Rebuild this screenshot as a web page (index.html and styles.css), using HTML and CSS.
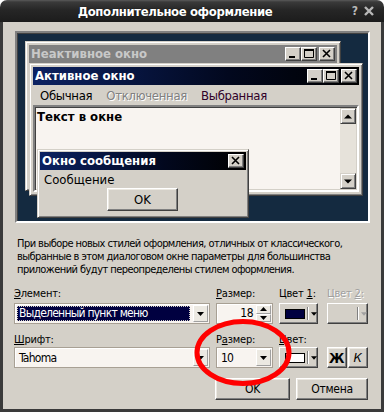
FILE: index.html
```html
<!DOCTYPE html>
<html lang="ru">
<head>
<meta charset="utf-8">
<title>Дополнительное оформление</title>
<link rel="stylesheet" href="styles.css">
</head>
<body>
<div class="win">
  <div class="titlebar">
    <span class="title">Дополнительное оформление</span>
    <span class="tb-help">?</span>
    <svg class="tb-close" width="12" height="12" viewBox="0 0 12 12"><path d="M2 2L10 10M10 2L2 10" stroke="#b8b8b8" stroke-width="2.4"/></svg>
  </div>
  <div class="body">
    <div class="preview">
      <div class="pw inactive">
        <div class="cap cap-inactive">
          <span class="cap-text">Неактивное окно</span>
          <div class="capbtns">
            <span class="cb"><svg width="14" height="12" viewBox="0 0 14 12"><rect x="3" y="8" width="6" height="2" fill="#000"/></svg></span>
            <span class="cb"><svg width="14" height="12" viewBox="0 0 14 12"><path d="M2.5 1.5h9v8h-9z" fill="none" stroke="#000"/><rect x="2" y="1" width="10" height="2" fill="#000"/></svg></span>
            <span class="cb cb-close"><svg width="14" height="12" viewBox="0 0 14 12"><path d="M3 2L10 9M10 2L3 9" stroke="#000" stroke-width="1.6"/></svg></span>
          </div>
        </div>
      </div>
      <div class="pw active">
        <div class="cap cap-active">
          <span class="cap-text">Активное окно</span>
          <div class="capbtns">
            <span class="cb"><svg width="14" height="12" viewBox="0 0 14 12"><rect x="3" y="8" width="6" height="2" fill="#000"/></svg></span>
            <span class="cb"><svg width="14" height="12" viewBox="0 0 14 12"><path d="M2.5 1.5h9v8h-9z" fill="none" stroke="#000"/><rect x="2" y="1" width="10" height="2" fill="#000"/></svg></span>
            <span class="cb cb-close"><svg width="14" height="12" viewBox="0 0 14 12"><path d="M3 2L10 9M10 2L3 9" stroke="#000" stroke-width="1.6"/></svg></span>
          </div>
        </div>
        <div class="menu">
          <span class="mi">Обычная</span>
          <span class="mi dis">Отключенная</span>
          <span class="mi sel">Выбранная</span>
        </div>
        <div class="client">
          <div class="ctext">Текст в окне</div>
          <div class="vscroll">
            <span class="sbtn"><svg width="8" height="5" viewBox="0 0 8 5"><path d="M0 4.5L4 0.5L8 4.5z" fill="#000"/></svg></span>
            <span class="track"></span>
            <span class="sbtn"><svg width="8" height="5" viewBox="0 0 8 5"><path d="M0 0.5L4 4.5L8 0.5z" fill="#000"/></svg></span>
          </div>
        </div>
      </div>
      <div class="pw msg">
        <div class="cap cap-active">
          <span class="cap-text">Окно сообщения</span>
          <div class="capbtns">
            <span class="cb cb-close"><svg width="14" height="12" viewBox="0 0 14 12"><path d="M3 2L10 9M10 2L3 9" stroke="#000" stroke-width="1.6"/></svg></span>
          </div>
        </div>
        <div class="msgtext">Сообщение</div>
        <div class="msgbtnrow"><span class="btn btn-msg">OK</span></div>
      </div>
    </div>

    <p class="desc">При выборе новых стилей оформления, отличных от классического,<br>выбранные в этом диалоговом окне параметры для большинства<br>приложений будут переопределены стилем оформления.</p>

    <div class="form">
      <div class="lbl row1"><u>Э</u>лемент:</div>
      <div class="lbl row1"><u>Р</u>азмер:</div>
      <div class="lbl row1">Цвет <u>1</u>:</div>
      <div class="lbl row1 lbl-dis">Цвет <u>2</u>:</div>

      <div class="combo w196">
        <span class="combo-val"><span class="hl">Выделенный пункт меню</span></span>
        <span class="dd"><svg width="7" height="4" viewBox="0 0 7 4"><path d="M0 0h7L3.5 4z" fill="#000"/></svg></span>
      </div>
      <div class="spin w57">
        <span class="spin-val">18</span>
        <span class="spin-btns">
          <span class="sp"><svg width="7" height="4" viewBox="0 0 7 4"><path d="M0 4h7L3.5 0z" fill="#000"/></svg></span>
          <span class="sp"><svg width="7" height="4" viewBox="0 0 7 4"><path d="M0 0h7L3.5 4z" fill="#000"/></svg></span>
        </span>
      </div>
      <div class="colbtn w39">
        <span class="swatch sw-navy"></span>
        <span class="cdiv"></span>
        <svg width="7" height="4" viewBox="0 0 7 4"><path d="M0 0h7L3.5 4z" fill="#000"/></svg>
      </div>
      <div class="colbtn w41 colbtn-dis">
        <span class="swatch sw-none"></span>
        <span class="cdiv"></span>
        <svg width="7" height="4" viewBox="0 0 7 4"><path d="M0 0h7L3.5 4z" fill="#a0a0a0"/></svg>
      </div>

      <div class="lbl row2"><u>Ш</u>рифт:</div>
      <div class="lbl row2">Р<u>а</u>змер:</div>
      <div class="lbl row2"><u>Ц</u>вет:</div>
      <div class="lbl row2"></div>

      <div class="combo w196">
        <span class="combo-val plain">Tahoma</span>
        <span class="dd"><svg width="7" height="4" viewBox="0 0 7 4"><path d="M0 0h7L3.5 4z" fill="#000"/></svg></span>
      </div>
      <div class="combo w57">
        <span class="combo-val plain">10</span>
        <span class="dd"><svg width="7" height="4" viewBox="0 0 7 4"><path d="M0 0h7L3.5 4z" fill="#000"/></svg></span>
      </div>
      <div class="colbtn w39">
        <span class="swatch sw-white"></span>
        <span class="cdiv"></span>
        <svg width="7" height="4" viewBox="0 0 7 4"><path d="M0 0h7L3.5 4z" fill="#000"/></svg>
      </div>
      <div class="bi">
        <span class="btn btn-b">Ж</span>
        <span class="btn btn-i">К</span>
      </div>
    </div>

    <div class="actions">
      <span class="btn btn-act">OK</span>
      <span class="btn btn-act btn-cancel">Отмена</span>
    </div>
  </div>
  <svg class="mark" width="384" height="412" viewBox="0 0 384 412"><ellipse cx="243" cy="352.5" rx="46" ry="31" fill="none" stroke="#f00" stroke-width="5"/></svg>
</div>
</body>
</html>
```

FILE: styles.css
```css
* { box-sizing: border-box; }
html, body { margin: 0; padding: 0; background: #fff; }
body {
  font-family: "DejaVu Sans Condensed", "DejaVu Sans", sans-serif;
  font-size: 11px;
  color: #000;
}
.win {
  position: relative;
  width: 384px;
  height: 412px;
}
.titlebar {
  position: relative;
  height: 22px;
  border-radius: 7px 7px 0 0;
  background: linear-gradient(#5a5a5a 0, #3a3a3a 2px, #262626 45%, #1c1c1c 100%);
  display: flex;
  align-items: center;
  justify-content: center;
}
.title {
  color: #fff;
  font-weight: bold;
  font-size: 13px;
  letter-spacing: -0.4px;
  margin-left: -34px;
  text-shadow: 0 0 1px #000;
}
.tb-help {
  position: absolute;
  right: 26px;
  top: 4px;
  color: #b8b8b8;
  font-weight: bold;
  font-size: 12px;
}
.tb-close { position: absolute; right: 9px; top: 5px; }

.body {
  height: 390px;
  background: #d4d0c8;
  border: 3px solid #3a3a3a;
  border-top: 0;
  padding: 9px 0 0 12px;
  display: flex;
  flex-direction: column;
}

/* preview canvas */
.preview {
  position: relative;
  width: 355px;
  height: 192px;
  background: #142a40;
  border: 2px solid;
  border-color: #808080 #fff #fff #808080;
  box-shadow: inset 1px 1px 0 #404040;
  flex: none;
  font-size: 13px;
}
.pw {
  position: absolute;
  background: #d4d0c8;
  border: 1px solid;
  border-color: #d4d0c8 #404040 #404040 #d4d0c8;
  box-shadow: inset 1px 1px 0 #fff, inset -1px -1px 0 #808080;
  padding: 3px;
  display: flex;
  flex-direction: column;
}
.inactive { left: 8px; top: 8px; width: 316px; height: 150px; }
.active { left: 12px; top: 30px; width: 334px; height: 133px; }
.msg { left: 20px; top: 116px; width: 212px; height: 69px; padding: 2px; }

.cap {
  height: 18px;
  flex: none;
  display: flex;
  align-items: center;
  justify-content: space-between;
  padding: 0 2px 0 2px;
  font-weight: bold;
  font-size: 13px;
}
.cap-inactive { background: #808080; color: #c8c8c8; }
.cap-active { background: linear-gradient(to right, #0c2262, #02081e 60%, #000); color: #fff; }
.cap-text { line-height: 18px; }
.capbtns { display: flex; }
.cb {
  width: 16px;
  height: 14px;
  background: #d4d0c8;
  border: 1px solid;
  border-color: #fff #404040 #404040 #fff;
  box-shadow: inset -1px -1px 0 #808080;
  display: flex;
  align-items: center;
  justify-content: center;
}
.cb-close { margin-left: 2px; }

.menu {
  height: 20px;
  flex: none;
  display: flex;
  align-items: center;
  gap: 14px;
  padding-left: 7px;
  font-size: 13px;
  letter-spacing: -0.3px;
  color: #000;
}
.mi.dis { color: #808080; text-shadow: 1px 1px 0 #fff; }
.mi.sel { color: #300028; }

.client {
  flex: 1;
  display: flex;
  justify-content: space-between;
  background: #f8f4f0;
  border: 2px solid;
  border-color: #808080 #fff #fff #808080;
  box-shadow: inset 1px 1px 0 #404040, inset -1px -1px 0 #d4d0c8;
}
.ctext {
  font-weight: bold;
  font-size: 13px;
  line-height: 15px;
  padding: 2px 0 0 2px;
}
.vscroll {
  width: 16px;
  display: flex;
  flex-direction: column;
  background: #d4d0c8;
  margin: 1px 1px 1px 0;
}
.sbtn {
  width: 16px;
  height: 16px;
  background: #d4d0c8;
  border: 1px solid;
  border-color: #d4d0c8 #404040 #404040 #d4d0c8;
  box-shadow: inset 1px 1px 0 #fff, inset -1px -1px 0 #808080;
  display: flex;
  align-items: center;
  justify-content: center;
}
.track { flex: 1; background: #e6e2da; }

.msgtext {
  font-size: 13px;
  line-height: 14px;
  padding: 3px 0 0 4px;
}
.msgbtnrow { padding: 1px 0 0 67px; }

.btn {
  display: inline-flex;
  align-items: center;
  justify-content: center;
  background: #d4d0c8;
  border: 1px solid;
  border-color: #fff #404040 #404040 #fff;
  box-shadow: inset -1px -1px 0 #808080, inset 1px 1px 0 #ece9e2;
  color: #000;
}
.btn-msg { width: 71px; height: 23px; font-size: 13px; }

/* description */
.desc {
  margin: 14px 0 0 2px;
  line-height: 13px;
  letter-spacing: -0.55px;
  white-space: nowrap;
}

/* form */
.form {
  margin-top: 11px;
  margin-left: -1px;
  display: grid;
  grid-template-columns: 202px 63px 48px 41px;
  grid-template-rows: 16px 21px 23px 21px;
}
.lbl { line-height: 13px; letter-spacing: -0.2px; }
.form > .row2 { align-self: end; height: 14px; }
.lbl-dis { color: #a0a0a0; text-shadow: 1px 1px 0 #fff; }
.w196 { width: 196px; }
.w57 { width: 57px; }
.w39 { width: 39px; }
.w41 { width: 41px; }

.combo, .spin {
  height: 21px;
  display: flex;
  background: #f8f4f0;
  border: 1px solid #a8a094;
  box-shadow: inset 1px 1px 0 #fff;
  padding: 1px;
}
.combo-val {
  flex: 1;
  display: flex;
  align-items: center;
  padding: 1px;
  font-size: 12px;
  letter-spacing: -0.75px;
}
.combo-val.plain { padding-left: 3px; }
.hl {
  flex: 1;
  height: 15px;
  background: #000040;
  color: #fff;
  outline: 1px dotted #d4d0c8;
  outline-offset: -1px;
  padding-left: 2px;
  line-height: 15px;
}
.dd {
  width: 15px;
  margin-left: 2px;
  background: #ece9e2;
  border: 1px solid;
  border-color: #fff #a0a0a0 #a0a0a0 #fff;
  display: flex;
  align-items: center;
  justify-content: center;
}
.spin-val {
  flex: 1;
  text-align: right;
  font-size: 12px;
  letter-spacing: -0.5px;
  line-height: 17px;
  padding-right: 3px;
}
.spin-btns { width: 15px; display: flex; flex-direction: column; }
.sp {
  flex: 1;
  background: #ece9e2;
  border: 1px solid;
  border-color: #fff #a0a0a0 #a0a0a0 #fff;
  display: flex;
  align-items: center;
  justify-content: center;
}
.colbtn {
  height: 21px;
  display: flex;
  align-items: center;
  background: #d4d0c8;
  border: 1px solid;
  border-color: #fff #404040 #404040 #fff;
  box-shadow: inset -1px -1px 0 #808080;
  padding-left: 5px;
}
.swatch { width: 20px; height: 10px; flex: none; }
.sw-navy { background: #000040; border: 1px solid #000; }
.sw-white { background: #fff; border: 1px solid #000; }
.sw-none { width: 21px; }
.colbtn-dis .sw-none { width: 22px; }
.cdiv {
  width: 2px;
  height: 13px;
  border-left: 1px solid #808080;
  border-right: 1px solid #fff;
  margin: 0 2px 0 2px;
}
.bi { display: flex; gap: 1px; }
.btn-b { width: 20px; height: 21px; font-weight: bold; font-size: 14px; }
.btn-i { width: 21px; height: 21px; font-style: italic; font-size: 13px; }

.actions {
  margin-top: 10px;
  padding-left: 200px;
  display: flex;
  gap: 6px;
}
.btn-act { width: 75px; height: 22px; font-size: 12px; letter-spacing: -0.3px; }
.btn-cancel { width: 72px; }

.mark { position: absolute; left: 0; top: 0; pointer-events: none; }
```
